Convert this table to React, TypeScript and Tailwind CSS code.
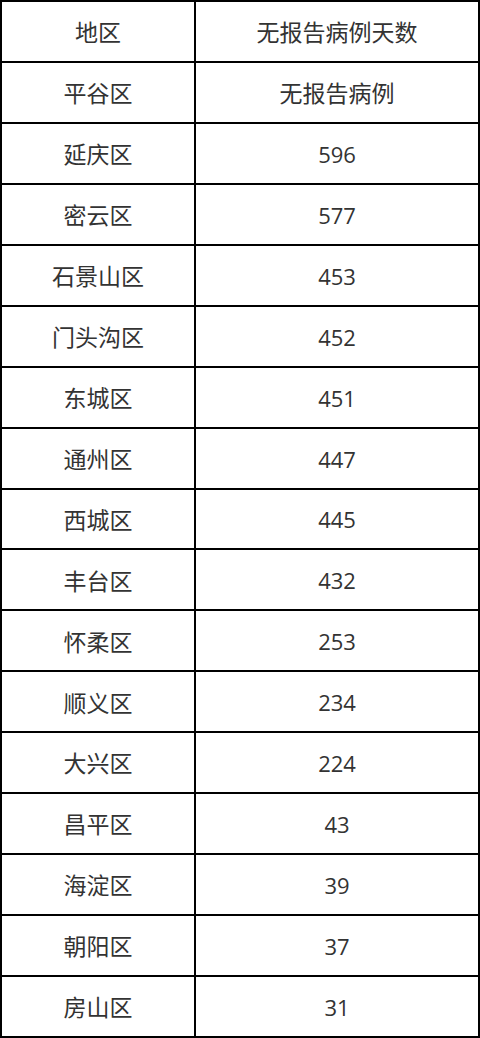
import React from "react";

const rows: [string, string][] = [
  ["平谷区", "无报告病例"],
  ["延庆区", "596"],
  ["密云区", "577"],
  ["石景山区", "453"],
  ["门头沟区", "452"],
  ["东城区", "451"],
  ["通州区", "447"],
  ["西城区", "445"],
  ["丰台区", "432"],
  ["怀柔区", "253"],
  ["顺义区", "234"],
  ["大兴区", "224"],
  ["昌平区", "43"],
  ["海淀区", "39"],
  ["朝阳区", "37"],
  ["房山区", "31"],
];

const isCjk = (s: string) => /[\u4e00-\u9fff]/.test(s);

export default function App() {
  return (
    <div className="w-[480px] bg-white">
      <table
        className="w-[480px] h-[1038px] border-collapse text-[22px] text-[#333333] table-fixed"
        style={{ fontFamily: '"Open Sans", "Noto Sans CJK SC", sans-serif' }}
      >
        <colgroup>
          <col className="w-[194px]" />
          <col />
        </colgroup>
        <tbody>
          <tr>
            <td className="border-2 border-black text-center align-middle pt-[2px] text-[23px]">地区</td>
            <td className="border-2 border-black text-center align-middle pt-[2px] text-[23px]">无报告病例天数</td>
          </tr>
          {rows.map(([a, b]) => (
            <tr key={a}>
              <td className="border-2 border-black text-center align-middle pt-[2px] text-[23px]">{a}</td>
              <td
                className={
                  isCjk(b)
                    ? "border-2 border-black text-center align-middle pt-[2px] text-[23px]"
                    : "border-2 border-black text-center align-middle pt-[2px] text-[22px]"
                }
              >
                {b}
              </td>
            </tr>
          ))}
        </tbody>
      </table>
    </div>
  );
}
